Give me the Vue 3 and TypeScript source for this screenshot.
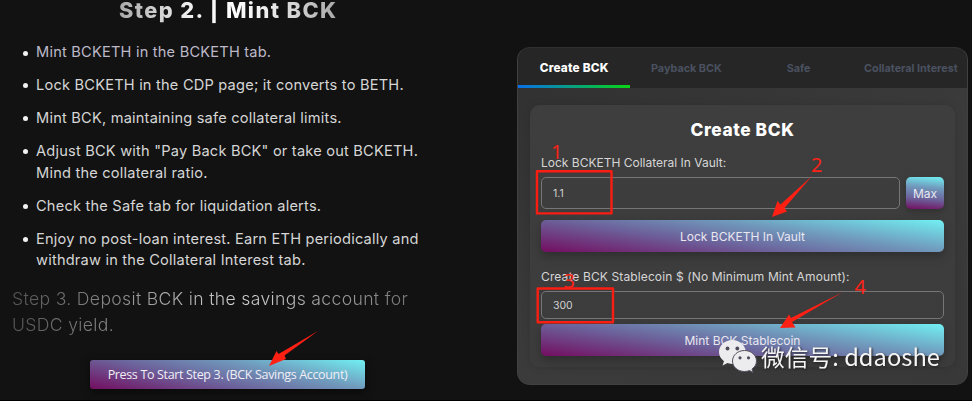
<script setup lang="ts">
import { ref } from 'vue'

const steps: { lines: string[]; tone?: string }[] = [
  { lines: ['Mint BCKETH in the BCKETH tab.'], tone: 'tinted' },
  { lines: ['Lock BCKETH in the CDP page; it converts to BETH.'] },
  { lines: ['Mint BCK, maintaining safe collateral limits.'] },
  { lines: ['Adjust BCK with "Pay Back BCK" or take out BCKETH.', 'Mind the collateral ratio.'] },
  { lines: ['Check the Safe tab for liquidation alerts.'] },
  { lines: ['Enjoy no post-loan interest. Earn ETH periodically and', 'withdraw in the Collateral Interest tab.'] },
]
const tabs = ['Create BCK', 'Payback BCK', 'Safe', 'Collateral Interest']
const activeTab = ref(0)
const lockAmount = ref('1.1')
const mintAmount = ref('300')
</script>

<template>
  <main class="page">
    <section class="guide">
      <h1 class="title">Step 2. | Mint BCK</h1>
      <ul class="steps">
        <li v-for="(step, i) in steps" :key="i" :class="step.tone">
          <span v-for="line in step.lines" :key="line" class="line">{{ line }}</span>
        </li>
      </ul>
      <p class="next"><span class="line">Step 3. Deposit BCK in the savings account for</span><span class="line">USDC yield.</span></p>
      <button class="start" type="button">Press To Start Step 3. (BCK Savings Account)</button>
    </section>

    <section class="card">
      <nav class="tabs">
        <button v-for="(tab, i) in tabs" :key="tab" type="button" class="tab" :class="{ active: i === activeTab }" @click="activeTab = i">
          {{ tab }}
        </button>
      </nav>
      <div class="panel">
        <h2 class="panel-title">Create BCK</h2>
        <label class="label lock-label" for="lock">Lock BCKETH Collateral In Vault:</label>
        <div class="row">
          <input id="lock" v-model="lockAmount" class="field" />
          <button class="max" type="button">Max</button>
        </div>
        <button class="action" type="button">Lock BCKETH In Vault</button>
        <label class="label mint-label" for="mint">Create BCK Stablecoin $ (No Minimum Mint Amount):</label>
        <input id="mint" v-model="mintAmount" class="field short" />
        <button class="action mint" type="button">Mint BCK Stablecoin</button>
      </div>
    </section>

    <svg class="notes" width="972" height="401" viewBox="0 0 972 401">
      <g fill="none" stroke="#f91d12" stroke-width="2.4" stroke-linejoin="round">
        <rect x="537" y="171.2" width="74.5" height="42.2" />
        <rect x="537.7" y="288.5" width="75.3" height="33.8" />
      </g>
      <g fill="#ff2014">
        <path d="M318 331L284.500 355.500L286 359L269 366L276.500 351L278.500 354Z" />
        <path d="M812 176L784.500 208L787 211.500L772 217L777.500 201L780.500 204.500Z" />
        <path d="M843 292L792 322L795.500 327.500L780 328L789 314.500L791 318Z" />
      </g>
      <g class="digits">
        <text x="551" y="158.500">1</text>
        <text x="811" y="171.500">2</text>
        <text x="563.500" y="288">3</text>
        <text x="854.500" y="294">4</text>
      </g>
      <g fill="#ececee">
        <path d="M732.500 340C725 340 719 345.300 719 352C719 355.800 721 359 724 361.200L722.500 365.500L727.500 363C730 364 733 364.200 735.500 363.800C746 363 747 356 746 351.500C745 345 739.500 340 732.500 340Z" />
        <path d="M744.500 350.500C737.800 350.500 732.500 355.200 732.500 361C732.500 367 737.800 371.500 744.500 371.500C746.300 371.500 748 371.200 749.500 370.600L753 372.500L752 369C755 367 756.500 364 756.500 361C756.500 355.200 751.200 350.500 744.500 350.500Z" stroke="#55515f" stroke-width="1" />
      </g>
      <g fill="#4d4a5a">
        <circle cx="727.500" cy="348.500" r="1.900" /><circle cx="737.300" cy="348.500" r="1.900" />
        <circle cx="740" cy="357.800" r="1.600" /><circle cx="748.500" cy="357.800" r="1.600" />
      </g>
      <text class="mark" x="761" y="366" textLength="179" lengthAdjust="spacingAndGlyphs">微信号: ddaoshe</text>
    </svg>
  </main>
</template>

<style>
body {
  margin: 0;
  background: #121212;
}
</style>

<style scoped>
.page {
  position: relative;
  box-sizing: border-box;
  display: flex;
  width: 972px;
  height: 401px;
  overflow: hidden;
  background: #121212;
  border-bottom: 1px solid #000;
  font-family: Inter, 'Noto Sans', sans-serif;
  color: #d6d6d6;
}
button {
  border: 0;
  padding: 0;
  font-family: inherit;
  color: #e9e7f0;
}
h1, h2, p, ul { margin: 0; padding: 0; }
.line { display: block; white-space: nowrap; }
.guide {
  width: 430px;
  margin-left: 12px;
  flex: none;
  display: flex;
  flex-direction: column;
}
.title {
  width: 222px;
  margin: -3px 0 0 107px;
  height: 28px;
  line-height: 27px;
  font-size: 21.8px;
  font-weight: 800;
  letter-spacing: 1.4px;
  white-space: nowrap;
  color: transparent;
  background: radial-gradient(circle at 49% 50%, #fff 0, #eee 40px, #a8a8a8 110px);
  background-clip: text;
}
.steps {
  margin-top: 17px;
  padding-left: 24px;
  list-style: none;
  font-size: 14.6px;
  line-height: 21.6px;
  letter-spacing: 0.21px;
}
.steps li { position: relative; margin-bottom: 11.4px; }
.steps li::before {
  content: '';
  position: absolute;
  left: -13px;
  top: 8.5px;
  width: 5px;
  height: 5px;
  border-radius: 50%;
  background: #f2f2f2;
}
.tinted { color: #bdb9c9; }
.next {
  width: 404px;
  margin-top: 3px;
  font-size: 17.6px;
  line-height: 26px;
  font-weight: 350;
  letter-spacing: 0.34px;
  color: transparent;
  background: radial-gradient(circle at 230px 16px, #d6d6d6 0, #b8b8b8 50px, #585858 220px);
  background-clip: text;
}
.start {
  width: 275px;
  height: 29px;
  margin: 22px 0 0 78px;
  border-radius: 3px;
  background: linear-gradient(12deg, #730d60, #6c629b 38%, #709bbd 67%, #71f0f2);
  box-shadow: 0 3px 8px rgb(0 0 0 / 50%);
  font-family: 'Open Sans', sans-serif;
  font-size: 12.5px;
  letter-spacing: -0.34px;
  color: #f1eef6;
  white-space: nowrap;
}
.card {
  box-sizing: border-box;
  width: 451px;
  height: 338px;
  margin: 47px 0 0 75px;
  flex: none;
  border: 1px solid #414141;
  border-top-color: #303030;
  border-radius: 13px;
  overflow: hidden;
  background: linear-gradient(150deg, #303030, #3b3b3b 55%, #383838);
}
.tabs {
  display: grid;
  grid-template-columns: repeat(4, 1fr);
  height: 40px;
  background: #262626;
}
.tab {
  position: relative;
  background: none;
  font-size: 10.8px;
  font-weight: 700;
  color: #4a5160;
  white-space: nowrap;
}
.tab.active { color: #fff; font-size: 11.8px; font-weight: 800; letter-spacing: 0.2px; }
.tab.active::after {
  content: '';
  position: absolute;
  left: 0;
  right: 0;
  bottom: 0;
  height: 3px;
  background: linear-gradient(90deg, #0870e8, #08d414);
}
.panel {
  box-sizing: border-box;
  display: flex;
  flex-direction: column;
  width: 425px;
  height: 262px;
  margin: 17px 0 0 12px;
  padding: 13px 11px 0;
  border-radius: 10px;
  background: linear-gradient(180deg, #3e3e3e, #3c3c3c);
  box-shadow: 0 0 8px rgb(0 0 0 / 13%);
}
.panel-title {
  line-height: 24px;
  font-size: 17.3px;
  font-weight: 800;
  letter-spacing: 0.6px;
  text-align: center;
  color: #fff;
}
.label {
  line-height: 16px;
  font-size: 12px;
  white-space: nowrap;
}
.lock-label { margin-top: 13px; }
.row { display: flex; gap: 6px; margin-top: 6px; }
.field {
  box-sizing: border-box;
  min-width: 0;
  flex: 1;
  height: 32px;
  padding: 0 11px;
  border: 1px solid #767676;
  border-radius: 5px;
  background: transparent;
  outline: 0;
  font-family: inherit;
  font-size: 10.5px;
  color: #d0d0d0;
}
.field.short { flex: none; height: 28px; margin-top: 6px; }
.max {
  width: 38px;
  height: 32px;
  border-radius: 5px;
  background: linear-gradient(5deg, #730d60, #6c629b 33%, #709bbd 67%, #71f0f2);
  box-shadow: 0 3px 6px rgb(0 0 0 / 20%);
  font-size: 12px;
}
.action {
  flex: none;
  height: 32px;
  margin-top: 11px;
  border-radius: 5px;
  background: linear-gradient(8deg, #730d60, #6c629b 38%, #709bbd 65%, #71f0f2);
  box-shadow: 0 4px 10px rgb(0 0 0 / 25%);
  font-size: 12px;
}
.mint-label { margin-top: 17px; letter-spacing: 0.12px; }
.action.mint { margin-top: 5px; }
.notes { position: absolute; inset: 0; pointer-events: none; }
.digits { font: 20px 'Noto Sans', sans-serif; fill: #f92318; }
.mark {
  font: 23px 'Noto Sans CJK SC', sans-serif;
  fill: #f5f5f5;
  filter: drop-shadow(1px 1px 1px #222);
}
</style>
